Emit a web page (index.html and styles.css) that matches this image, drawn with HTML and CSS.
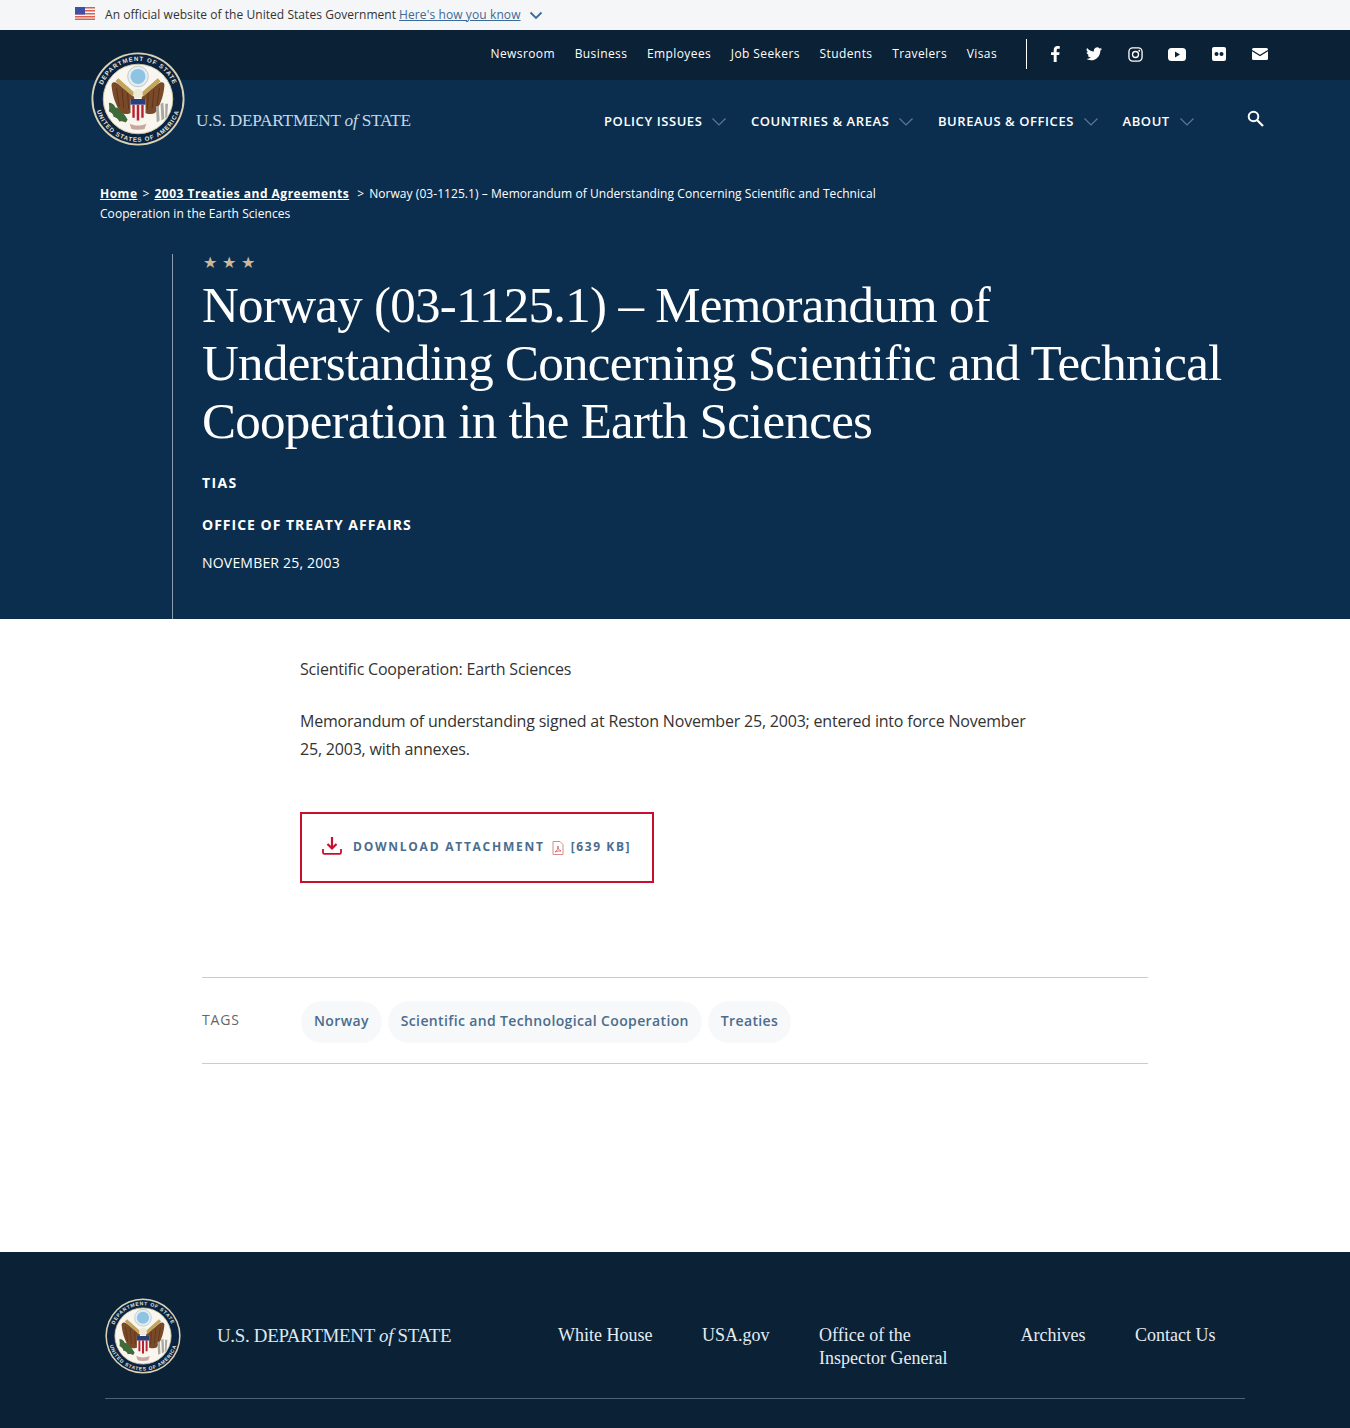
FILE: index.html
```html
<!DOCTYPE html>
<html lang="en">
<head>
  <meta charset="UTF-8" />
  <meta name="viewport" content="width=device-width, initial-scale=1.0"/>
  <title>Norway (03-1125.1) – Memorandum of Understanding</title>
  <link rel="stylesheet" href="styles.css">
</head>
<body>

  <!-- shared seal -->
  <svg class="defs" width="0" height="0">
    <defs>
      <path id="ringTop" d="M9.500 50a40.500 40.500 0 0 1 81 0"/>
      <path id="ringBottom" d="M4.500 50a45.500 45.500 0 0 0 91 0"/>
      <symbol id="seal" viewBox="0 0 100 100">
        <circle cx="50" cy="50" r="49.500" fill="#d9d3b4"/>
        <circle cx="50" cy="50" r="47.500" fill="#0b2240"/>
        <circle cx="50" cy="50" r="37" fill="#f8f6ee" stroke="#cfc89f" stroke-width="1"/>
        <text class="seal-text"><textPath href="#ringTop" startOffset="50%" text-anchor="middle">DEPARTMENT OF STATE</textPath></text>
        <text class="seal-text"><textPath href="#ringBottom" startOffset="50%" text-anchor="middle">UNITED STATES OF AMERICA</textPath></text>
        <circle cx="50" cy="26" r="11" fill="#e4edf2" stroke="#b9c6d0" stroke-width="1"/>
        <circle cx="50" cy="26" r="8" fill="#8fc3e2"/>
        <path d="M46 48L29 34c-4-3-8-2-7 3 1 11 5 21 10 28 4 2 10 1 14-2z" fill="#7a4a28"/>
        <path d="M54 48l17-14c4-3 8-2 7 3-1 11-5 21-10 28-4 2-10 1-14-2z" fill="#7a4a28"/>
        <path d="M27 38l3 20M33 40l2 20M39 44l1 17M73 38l-3 20M67 40l-2 20M61 44l-1 17" stroke="#5a3319" stroke-width="1"/>
        <path d="M29 28l18 16-3 3-18-16zM71 28L53 44l3 3 18-16z" fill="#c2a55c"/>
        <circle cx="50" cy="44" r="5" fill="#efe9d8"/>
        <path d="M42 50h16v15c0 5-4 7-8 10-4-3-8-5-8-10z" fill="#f4f0ea"/>
        <path d="M42 50h16v6H42z" fill="#27407d"/>
        <path d="M44 56h2.500v14H44zM48.700 56h2.600v17h-2.600zM53.500 56H56v14h-2.500z" fill="#b8202f"/>
        <path d="M19 54c3 0 6 2 7 5 3 0 5 2 6 5 3 1 5 4 7 8l-2 3c-2-1-5-2-7-1-1-3-3-4-6-5 0-3-3-5-5-6 1-3 0-6 0-9z" fill="#3f6b3a"/>
        <path d="M74 55l3-1 1 17-3 2zM79 55l3 0-1 14-2 2zM69 58l3-1 1 16-3 2z" fill="#a9a8a0"/>
        <path d="M41 76c5 3 13 3 18 0l-2 6c-4 1-10 1-14 0z" fill="#c9a7a0"/>
      </symbol>
    </defs>
  </svg>

  <div class="gov-banner">
    <svg class="flag" viewBox="0 0 20 13" width="20" height="13">
      <rect width="20" height="13" fill="#f6f6f6"/>
      <path d="M0 0h20v1.500H0zM0 3h20v1.500H0zM0 6h20v1.500H0zM0 9h20v1.500H0zM0 11.500h20V13H0z" fill="#d8604f"/>
      <rect width="10" height="7.500" fill="#3f4ea8"/>
    </svg>
    <span class="gov-text">An official website of the United States Government</span>
    <a class="gov-link" href="#">Here's how you know</a>
    <svg class="gov-chevron" viewBox="0 0 14 9" width="14" height="9"><path d="M1.500 1.500L7 7l5.500-5.500" fill="none" stroke="#3d6a96" stroke-width="1.800"/></svg>
  </div>

  <div class="top-bar">
    <nav class="top-links">
      <a href="#">Newsroom</a>
      <a href="#">Business</a>
      <a href="#">Employees</a>
      <a href="#">Job Seekers</a>
      <a href="#">Students</a>
      <a href="#">Travelers</a>
      <a href="#">Visas</a>
    </nav>
    <div class="socials">
      <svg viewBox="0 0 10 18" width="9" height="16"><path d="M3 18V10H0V7h3V4.500C3 1.600 4.700 0 7.300 0c1 0 2 .1 2.500.2v2.900H8c-1.300 0-1.700.8-1.700 1.700V7h3.300l-.5 3H6.300v8z" fill="#fff"/></svg>
      <svg viewBox="0 0 24 20" width="16" height="14"><path d="M24 2.400c-.9.400-1.800.7-2.800.8 1-.6 1.800-1.600 2.200-2.700-1 .6-2 1-3.100 1.200A4.900 4.900 0 0 0 11.900 6.200 14 14 0 0 1 1.700.9a4.900 4.900 0 0 0 1.500 6.600c-.8 0-1.600-.2-2.200-.6 0 2.400 1.700 4.400 3.900 4.900-.7.200-1.500.2-2.200.1.600 2 2.400 3.400 4.600 3.400A9.900 9.900 0 0 1 0 17.300 14 14 0 0 0 7.500 19.500c9.100 0 14.300-7.700 14-14.600 1-.7 1.800-1.500 2.500-2.500z" fill="#fff"/></svg>
      <svg viewBox="0 0 16 16" width="15" height="15"><rect x="1" y="1" width="14" height="14" rx="4" fill="none" stroke="#fff" stroke-width="1.400"/><circle cx="8" cy="8" r="3.200" fill="none" stroke="#fff" stroke-width="1.400"/><circle cx="12" cy="4" r="1" fill="#fff"/></svg>
      <svg viewBox="0 0 18 13" width="18" height="13"><rect width="18" height="13" rx="3.500" fill="#fff"/><path d="M7 3.500v6l5-3z" fill="#0a2136"/></svg>
      <svg viewBox="0 0 14 14" width="14" height="14"><rect width="14" height="14" rx="2" fill="#fff"/><circle cx="4.500" cy="7" r="2" fill="#0a2136"/><circle cx="9.500" cy="7" r="2" fill="#0a2136"/></svg>
      <svg viewBox="0 0 16 12" width="16" height="12"><rect width="16" height="12" rx="1.500" fill="#fff"/><path d="M0 2.500l8 5 8-5" fill="none" stroke="#0a2136" stroke-width="1.200"/></svg>
    </div>
  </div>

  <header class="hero">
    <div class="main-bar">
      <a class="logo" href="#">
        <svg class="logo-seal"><use href="#seal"/></svg>
        <span class="wordmark">U.S. DEPARTMENT <i>of</i> STATE</span>
      </a>
      <nav class="main-nav">
        <a href="#">Policy Issues<svg viewBox="0 0 14 8" width="14" height="8"><path d="M.5.500L7 7l6.500-6.500" fill="none" stroke="#5d7890" stroke-width="1.200"/></svg></a>
        <a href="#">Countries &amp; Areas<svg viewBox="0 0 14 8" width="14" height="8"><path d="M.5.500L7 7l6.500-6.500" fill="none" stroke="#5d7890" stroke-width="1.200"/></svg></a>
        <a href="#">Bureaus &amp; Offices<svg viewBox="0 0 14 8" width="14" height="8"><path d="M.5.500L7 7l6.500-6.500" fill="none" stroke="#5d7890" stroke-width="1.200"/></svg></a>
        <a href="#">About<svg viewBox="0 0 14 8" width="14" height="8"><path d="M.5.500L7 7l6.500-6.500" fill="none" stroke="#5d7890" stroke-width="1.200"/></svg></a>
      </nav>
      <svg class="search" viewBox="0 0 17 17" width="17" height="17"><circle cx="6.500" cy="6.500" r="4.800" fill="none" stroke="#fff" stroke-width="2"/><path d="M10 10l6 6" stroke="#fff" stroke-width="2.200"/></svg>
    </div>

    <div class="crumbs">
      <a href="#">Home</a><span class="sep">&gt;</span><a href="#">2003 Treaties and Agreements</a><span class="sep sep-last">&gt;</span>Norway (03-1125.1) – Memorandum of Understanding Concerning Scientific and Technical Cooperation in the Earth Sciences
    </div>

    <div class="hero-body">
      <div class="stars">★★★</div>
      <h1>Norway (03-1125.1) – Memorandum of Understanding Concerning Scientific and Technical Cooperation in the Earth Sciences</h1>
      <p class="kicker">TIAS</p>
      <p class="kicker office">Office of Treaty Affairs</p>
      <p class="date">November 25, 2003</p>
    </div>
  </header>

  <main class="content">
    <p>Scientific Cooperation: Earth Sciences</p>
    <p>Memorandum of understanding signed at Reston November 25, 2003; entered into force November 25, 2003, with annexes.</p>
    <a class="download" href="#">
      <svg class="download-icon" viewBox="0 0 20 18" width="20" height="18"><path d="M10 0v11M5.500 7l4.500 4.500L14.500 7" fill="none" stroke="#c8102e" stroke-width="2.200"/><path d="M1 12v3.500c0 .8.500 1.300 1.300 1.300h15.400c.8 0 1.300-.5 1.300-1.300V12" fill="none" stroke="#c8102e" stroke-width="1.800"/></svg>
      <span class="download-label">Download Attachment</span>
      <svg class="pdf" viewBox="0 0 12 14" width="12" height="14"><path d="M1 .5h7l3 3v10H1z" fill="#fff" stroke="#d98a8a"/><path d="M3 11c2-1 3-3 3-6 0 3 1 4 3 5-2 0-4 0-6 1z" fill="none" stroke="#d0555a" stroke-width=".8"/></svg>
      <span class="download-size">[639 kB]</span>
    </a>

    <div class="tags">
      <span class="tags-label">Tags</span>
      <a class="tag" href="#">Norway</a>
      <a class="tag" href="#">Scientific and Technological Cooperation</a>
      <a class="tag" href="#">Treaties</a>
    </div>
  </main>

  <footer class="footer">
    <div class="footer-row">
      <a class="footer-logo" href="#">
        <svg class="footer-seal"><use href="#seal"/></svg>
        <span class="footer-wordmark">U.S. DEPARTMENT <i>of</i> STATE</span>
      </a>
      <nav class="footer-links">
        <a href="#">White House</a>
        <a href="#">USA.gov</a>
        <a class="wide" href="#">Office of the Inspector General</a>
        <a href="#">Archives</a>
        <a href="#">Contact Us</a>
      </nav>
    </div>
  </footer>

</body>
</html>
```

FILE: styles.css
```css
* {
  box-sizing: border-box;
}

body {
  margin: 0;
  font-family: "Open Sans", Arial, sans-serif;
  background: #fff;
  color: #333;
}

a {
  color: inherit;
  text-decoration: none;
}

.defs {
  position: absolute;
}

.seal-text {
  font-family: "Liberation Sans", Arial, sans-serif;
  font-size: 6.500px;
  font-weight: 700;
  letter-spacing: 1px;
  fill: #e8e6d8;
}

/* gov banner */
.gov-banner {
  height: 30px;
  background: #f5f6f7;
  display: flex;
  align-items: center;
  padding: 0 0 2px 75px;
  font-size: 12px;
  letter-spacing: .05px;
  color: #333;
}

.flag {
  margin-right: 10px;
  margin-top: -1px;
}

.gov-link {
  color: #3d6a96;
  text-decoration: underline;
  margin-left: 3px;
  letter-spacing: .1px;
}

.gov-chevron {
  margin-left: 8px;
  margin-top: 3px;
}

/* top bar */
.top-bar {
  height: 50px;
  background: #0a2136;
  display: flex;
  justify-content: flex-end;
  align-items: center;
  padding-right: 82px;
  color: #fff;
}

.top-links {
  display: flex;
  gap: 19.700px;
  font-size: 12px;
  letter-spacing: .4px;
  padding-right: 29px;
  height: 30px;
  align-items: center;
  border-right: 1px solid #fff;
  margin-top: -2px;
}

.top-links a {
  margin-top: -2px;
}

.socials {
  display: flex;
  align-items: center;
  gap: 25.800px;
  margin-left: 24px;
  margin-top: -2px;
}

/* hero */
.hero {
  background: #0c2e4e;
  height: 539px;
  color: #fff;
}

.main-bar {
  display: flex;
  align-items: flex-start;
  padding-left: 91px;
  height: 101px;
}

.logo {
  display: flex;
  align-items: center;
  width: 513px;
  margin-top: -28px;
  position: relative;
}

.logo-seal {
  width: 94px;
  height: 94px;
}

.wordmark {
  font-family: "Liberation Serif", serif;
  font-size: 17.300px;
  color: #c5d8e8;
  margin-left: 11px;
  margin-top: 43px;
  white-space: nowrap;
  letter-spacing: -.25px;
}

.main-nav {
  display: flex;
  margin-top: 32px;
  font-size: 13px;
  font-weight: 600;
  letter-spacing: .58px;
  text-transform: uppercase;
  gap: 24.500px;
}

.main-nav a {
  display: flex;
  align-items: center;
}

.main-nav svg {
  margin-left: 10px;
  margin-top: 2px;
}

.search {
  margin-left: 53px;
  margin-top: 30px;
}

.crumbs {
  margin: 3px 0 0 100px;
  width: 790px;
  font-size: 12px;
  line-height: 20px;
  letter-spacing: .06px;
}

.crumbs a {
  font-weight: 700;
  text-decoration: underline;
  letter-spacing: .5px;
}

.sep {
  margin: 0 5px 0 5px;
}

.sep-last {
  margin-left: 8px;
}

.hero-body {
  margin: 30px 0 0 172px;
  height: 365px;
  border-left: 1px solid #8b9dac;
  padding-left: 29px;
}

.stars {
  color: #cdb998;
  font-size: 16px;
  line-height: 16px;
  letter-spacing: 5px;
  margin-left: 1px;
}

.hero h1 {
  font-family: "Liberation Serif", serif;
  font-weight: 400;
  font-size: 51px;
  line-height: 58px;
  letter-spacing: -.72px;
  margin: 6px 0 0;
  width: 1060px;
}

.kicker {
  margin: 23px 0 0;
  font-size: 14px;
  line-height: 20px;
  font-weight: 700;
  letter-spacing: 1.400px;
  text-transform: uppercase;
}

.kicker.office {
  margin-top: 22px;
  letter-spacing: 1px;
}

.date {
  margin: 18px 0 0;
  font-size: 14px;
  line-height: 20px;
  letter-spacing: .2px;
  text-transform: uppercase;
}

/* content */
.content {
  height: 633px;
  padding-top: 36px;
}

.content p {
  margin: 0 0 24px 300px;
  width: 740px;
  font-size: 16px;
  line-height: 28px;
  letter-spacing: -.2px;
  color: #333;
}

.download {
  margin: 49px 0 0 300px;
  width: 354px;
  height: 71px;
  border: 2px solid #c8102e;
  display: flex;
  align-items: center;
  padding: 0 0 2px 20px;
  font-size: 12px;
  font-weight: 700;
  letter-spacing: 1.750px;
  text-transform: uppercase;
  color: #4a6d8f;
}

.download-icon {
  margin-top: -2px;
}

.download-label {
  margin-left: 11px;
}

.pdf {
  margin-left: 7px;
  margin-top: 3px;
}

.download-size {
  margin-left: 7px;
  letter-spacing: 1.600px;
}

.tags {
  margin: 94px 0 0 202px;
  width: 946px;
  height: 87px;
  border-top: 1px solid #ccc;
  border-bottom: 1px solid #ccc;
  display: flex;
  align-items: center;
  gap: 8px;
}

.tags-label {
  width: 92px;
  font-size: 14px;
  letter-spacing: .8px;
  text-transform: uppercase;
  color: #666;
  margin-top: -3px;
}

.tag {
  height: 40px;
  margin-top: 3px;
  padding: 0 12px 3px;
  border-radius: 20px;
  background: #f7f8f9;
  box-shadow: 0 0 2px rgba(0,0,0,.08);
  display: flex;
  align-items: center;
  font-size: 14px;
  font-weight: 600;
  letter-spacing: .36px;
  color: #4a6d8f;
}

/* footer */
.footer {
  height: 176px;
  background: #0a2136;
  color: #fff;
  padding: 46px 105px 0;
}

.footer-row {
  display: flex;
  align-items: flex-start;
  height: 101px;
  border-bottom: 1px solid #4e6272;
}

.footer-logo {
  display: flex;
  align-items: center;
  width: 453px;
}

.footer-seal {
  width: 76px;
  height: 76px;
}

.footer-wordmark {
  font-family: "Liberation Serif", serif;
  font-size: 18.900px;
  color: #dce7f0;
  margin-left: 36px;
  white-space: nowrap;
  letter-spacing: -.3px;
}

.footer-links {
  display: flex;
  gap: 49.500px;
  padding-top: 26px;
  font-family: "Liberation Serif", serif;
  font-size: 18px;
  line-height: 23px;
  color: #e6ecf1;
}

.footer-links .wide {
  width: 152px;
}
```
